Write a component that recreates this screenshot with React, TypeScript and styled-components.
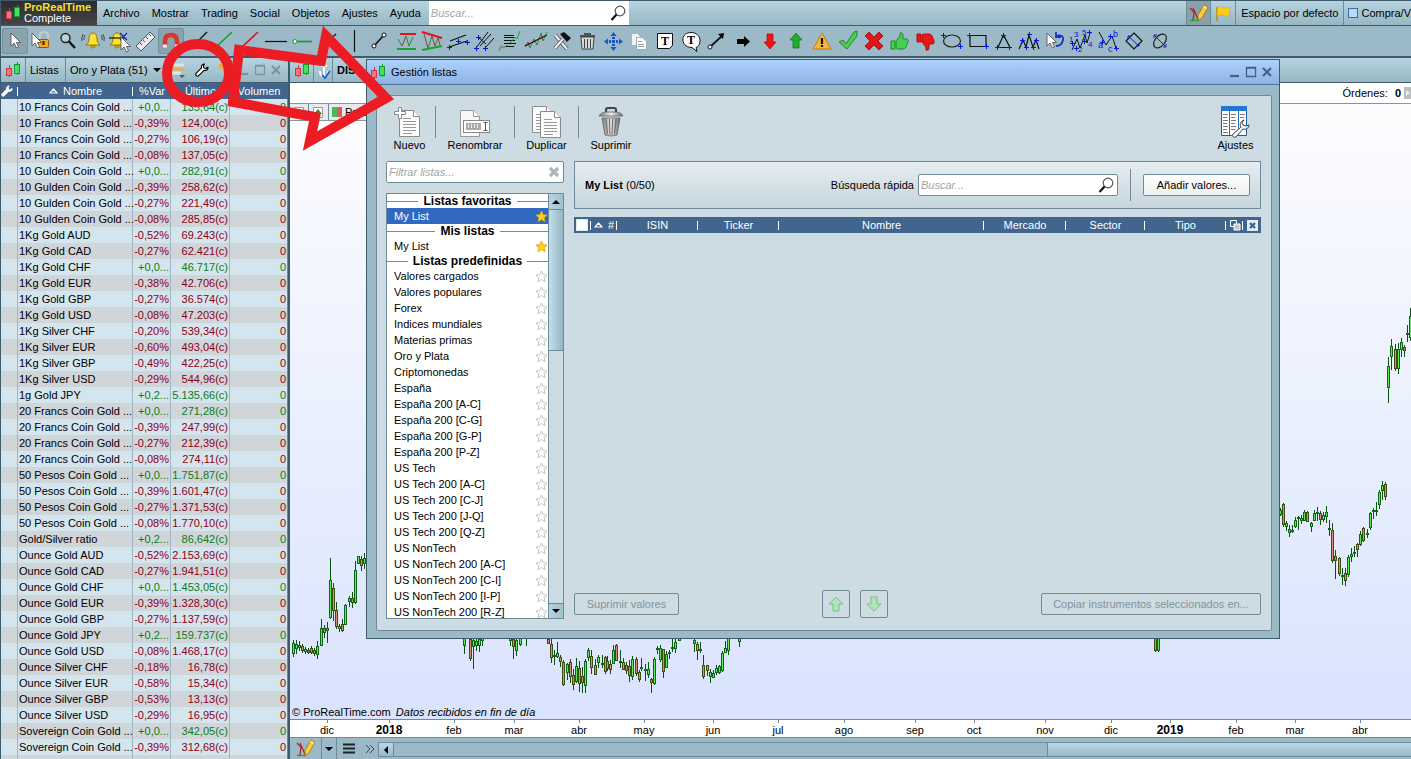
import React from "react";
import styled, { createGlobalStyle, css } from "styled-components";

const GlobalStyle = createGlobalStyle`
  * { box-sizing: border-box; }
  body { margin: 0; font-family: "Liberation Sans", Arial, sans-serif; font-size: 11px; line-height: 14px; color: #000; }
  button, input { font: inherit; color: inherit; margin: 0; }
  button { background: none; border: 0; padding: 0; }
  svg { display: block; flex: none; }
`;

const frame = "#3f5a6b";
const edge = "#6f8b9a";
const steel = "#9bb9c6";
const navy = "#41658c";
const barGradient = "linear-gradient(#b5d4df, #98b7c4)";

/* ---------- shell ---------- */

const Shell = styled.div`
  position: relative;
  display: flex;
  flex-direction: column;
  height: 100vh;
  overflow: hidden;
  background: ${steel};
  border-left: 1px solid ${frame};
  white-space: nowrap;
`;

const MenuBar = styled.nav`
  display: flex;
  flex: none;
  height: 26px;
  border-top: 1px solid ${frame};
  border-bottom: 1px solid ${frame};
  background: ${barGradient};
`;

const Brand = styled.div`
  display: flex;
  align-items: center;
  gap: 2px;
  width: 96px;
  padding-left: 4px;
  background: linear-gradient(#2c2c2e, #454548);
  color: #fff;
`;

const BrandText = styled.div`
  line-height: 11px;
  strong {
    display: block;
    color: #f5e02c;
  }
`;

const MenuItems = styled.div`
  display: flex;
  align-items: center;
  gap: 12px;
  padding: 0 8px 0 6px;
`;

const SearchBox = styled.label<{ $width: number; $framed?: boolean }>`
  display: flex;
  align-items: center;
  width: ${(p) => p.$width}px;
  height: ${(p) => (p.$framed ? "22px" : "auto")};
  padding: 0 3px 0 2px;
  background: #fff;
  ${(p) => p.$framed && css`border: 1px solid ${edge}; border-radius: 2px;`}
  input {
    flex: 1;
    min-width: 0;
    border: 0;
    padding: 0;
    outline: 0;
    background: none;
    font-style: italic;
  }
  input::placeholder { color: #a3a3a3; opacity: 1; }
`;

const Spacer = styled.div`
  flex: 1;
`;

const Workspace = styled.div`
  display: flex;
  align-items: stretch;
`;

const WorkspaceButton = styled.button<{ $on?: boolean }>`
  display: flex;
  align-items: center;
  justify-content: center;
  width: 25px;
  border-right: 1px solid ${edge};
  ${(p) => p.$on && css`background: #8ba0a9; border-left: 1px solid ${edge};`}
`;

const WorkspaceName = styled.button`
  padding: 0 5px;
  border-right: 1px solid ${edge};
`;

const TradeToggle = styled.label`
  display: flex;
  align-items: center;
  gap: 3px;
  padding-left: 4px;
  input {
    appearance: none;
    flex: none;
    width: 10px;
    height: 10px;
    border: 1px solid #3c6ea5;
    background: #b9dafc;
  }
`;

const ToolStrip = styled.div`
  display: flex;
  flex: none;
  align-items: center;
  height: 32px;
  padding-left: 1px;
  border-bottom: 2px solid ${frame};
`;

const Tool = styled.button<{ $on?: boolean }>`
  flex: none;
  width: 26px;
  height: 26px;
  border: 1px solid transparent;
  border-radius: 2px;
  svg { margin: -1px; }
  ${(p) => p.$on && css`background: #8ba3ae; border-color: #7690a0;`}
`;

const Main = styled.main`
  display: flex;
  flex: 1;
  min-height: 0;
`;

/* ---------- quote list ---------- */

const ListPanel = styled.section`
  flex: none;
  width: 289px;
  overflow: hidden;
  border-right: 2px solid ${frame};
  background: #d5e5ed;
`;

const PanelHeader = styled.header`
  display: flex;
  flex: none;
  align-items: stretch;
  height: 25px;
  background: ${barGradient};
  border-bottom: 1px solid ${frame};
`;

const HeaderCell = styled.div<{ $width?: number; $plain?: boolean; $bold?: boolean }>`
  display: flex;
  align-items: center;
  gap: 5px;
  width: ${(p) => (p.$width ? `${p.$width}px` : "auto")};
  padding: 0 4px;
  font-weight: ${(p) => (p.$bold ? 700 : 400)};
  border-right: ${(p) => (p.$plain ? "0" : `1px solid ${edge}`)};
`;

const HeaderTools = styled.div`
  display: flex;
  align-items: center;
  gap: 9px;
  padding: 0 5px;
`;

const WindowButtons = styled.div`
  display: flex;
  align-items: center;
  gap: 4px;
  margin-left: auto;
  padding-right: 6px;
`;

const QuoteTable = styled.table`
  width: 287px;
  table-layout: fixed;
  border-collapse: separate;
  border-spacing: 0;
  th {
    height: 16px;
    padding: 0;
    color: #fff;
    font-weight: 400;
    background: ${navy} linear-gradient(#fff, #fff) no-repeat right center / 1px 9px;
  }
  th:nth-child(3), th:nth-child(4), th:nth-child(5) { background-image: none; }
  th > span { display: flex; align-items: center; justify-content: center; gap: 5px; }
  td {
    height: 16px;
    padding: 0 1px 0 0;
    text-align: right;
    line-height: 16px;
    border-right: 1px solid #9fb6c4;
  }
  td:nth-child(2) { text-align: left; color: #000; padding: 0 0 0 1px; }
  td:nth-child(5) { border-right-color: ${edge}; }
`;

const QuoteRow = styled.tr<{ $up: boolean }>`
  color: ${(p) => (p.$up ? "#0c7c1c" : "#8c0018")};
  background: #d5e5ed;
  &:nth-child(even) { background: #d0d5d9; }
`;

/* ---------- chart ---------- */

const ChartPanel = styled.section`
  display: flex;
  flex: 1;
  flex-direction: column;
  min-width: 0;
`;

const OrdersBar = styled.div`
  display: flex;
  flex: none;
  align-items: center;
  justify-content: flex-end;
  gap: 3px;
  height: 21px;
  background: #fff;
  border-bottom: 1px solid #8a949b;
  b { margin-left: 4px; }
`;

const PlotArea = styled.div`
  display: flex;
  flex: 1;
  flex-direction: column;
  min-height: 0;
  background: linear-gradient(#fdfdfe, #eef3fe 40%, #d9e3fd);
  > svg { flex: 1; min-height: 0; }
`;

const IndicatorTabs = styled.div`
  display: flex;
  height: 17px;
  width: 120px;
  border-bottom: 1px solid #8a949b;
  background: #e6ebee;
  > div { padding: 0 3px; gap: 3px; }
`;

const Credits = styled.div`
  padding-left: 2px;
  em { margin-left: 2px; }
`;

const AxisBar = styled.div`
  height: 19px;
  background: #fff;
  border-top: 1px solid ${edge};
  border-bottom: 1px solid ${edge};
`;

const ChartFooter = styled.footer`
  display: flex;
  align-items: stretch;
  height: 21px;
`;

const FooterButton = styled.button<{ $width: number; $line?: boolean }>`
  display: flex;
  align-items: center;
  justify-content: center;
  width: ${(p) => p.$width}px;
  border-right: ${(p) => (p.$line ? `1px solid ${edge}` : "0")};
`;

const HScroll = styled.div`
  display: flex;
  flex: 1;
  margin: 4px 0 2px;
  border: 1px solid ${edge};
  border-right: 0;
`;

const HScrollThumb = styled.div`
  width: 364px;
  margin-left: auto;
  border-left: 1px solid ${edge};
  background: linear-gradient(#b9d9e4, #98b9c6);
`;

/* ---------- dialog ---------- */

const Dialog = styled.section`
  position: absolute;
  left: 365px;
  right: 131px;
  top: 59px;
  bottom: 120px;
  display: flex;
  flex-direction: column;
  border: 1px solid ${frame};
  background: ${steel};
`;

const TitleBar = styled.header`
  display: flex;
  flex: none;
  align-items: center;
  gap: 4px;
  height: 25px;
  padding-left: 3px;
  background: linear-gradient(#abd1fc, #8fb3e3);
  border-bottom: 1px solid #4d7398;
`;

const DialogBody = styled.div`
  display: flex;
  flex: 1;
  flex-direction: column;
  min-height: 0;
  margin: 10px 7px 7px 9px;
  padding: 10px 10px 11px 9px;
  border: 1px solid ${edge};
  border-radius: 2px;
  background: #cddbe2;
`;

const DialogTools = styled.div`
  display: flex;
  flex: none;
  height: 55px;
`;

const DialogTool = styled.button<{ $width: number }>`
  display: flex;
  flex-direction: column;
  align-items: center;
  width: ${(p) => p.$width}px;
  height: 46px;
  svg { height: 32px; }
`;

const Divider = styled.div`
  flex: none;
  width: 1px;
  height: 32px;
  margin: 0 2px;
  background: ${edge};
`;

const Columns = styled.div`
  display: grid;
  grid-template-columns: 178px 1fr;
  gap: 10px;
  flex: 1;
  min-height: 0;
`;

const Column = styled.div`
  display: flex;
  flex-direction: column;
  min-height: 0;
  min-width: 0;
`;

const ListBox = styled.div`
  display: flex;
  flex: 1;
  min-height: 0;
  margin-top: 10px;
  border: 1px solid ${edge};
  background: #fff;
`;

const ListItems = styled.ul`
  flex: 1;
  margin: 0;
  padding: 0;
  list-style: none;
  overflow: hidden;
`;

const GroupTitle = styled.li`
  display: flex;
  align-items: center;
  gap: 5px;
  height: 14px;
  font-size: 12px;
  font-weight: 700;
  &::before, &::after { content: ""; flex: 1; height: 1px; background: ${edge}; }
`;

const ListItem = styled.li<{ $selected?: boolean }>`
  display: flex;
  align-items: center;
  justify-content: space-between;
  height: 16px;
  padding: 0 0 0 7px;
  ${(p) => p.$selected && css`background: #3068c2; color: #fff;`}
`;

const VScroll = styled.div`
  display: flex;
  flex-direction: column;
  width: 15px;
  border-left: 1px solid ${edge};
  background: #cddbe2;
`;

const ScrollArrow = styled.button`
  display: flex;
  flex: none;
  align-items: center;
  justify-content: center;
  height: 15px;
  background: linear-gradient(90deg, #b8d5df, #9fc0cc);
  &:last-child { border-top: 1px solid ${edge}; }
`;

const HArrow = styled.button`
  display: flex;
  flex: none;
  align-items: center;
  justify-content: center;
  width: 15px;
  border-right: 1px solid ${edge};
  background: linear-gradient(#b9d9e4, #98b9c6);
`;

const VScrollThumb = styled.div`
  height: 142px;
  border-top: 1px solid ${edge};
  border-bottom: 1px solid ${edge};
  background: linear-gradient(90deg, #c4dfe8, #93b6c4);
`;

const ListHeader = styled.div`
  display: flex;
  flex: none;
  align-items: center;
  gap: 10px;
  height: 48px;
  padding: 0 10px;
  border: 1px solid ${edge};
  background: linear-gradient(#e6edf1, #c5d5dd);
`;

const QuickSearch = styled.div`
  display: flex;
  align-items: center;
  gap: 4px;
  margin-left: auto;
`;

const PushButton = styled.button<{ $width: number; $height?: number }>`
  display: flex;
  align-items: center;
  justify-content: center;
  width: ${(p) => p.$width}px;
  height: ${(p) => p.$height ?? 22}px;
  border: 1px solid ${edge};
  border-radius: 2px;
  background: linear-gradient(#fff, #eceff1);
  &:disabled { background: none; color: #84949d; }
`;

const ValuesTable = styled.table`
  width: 100%;
  flex: none;
  margin-top: 8px;
  table-layout: fixed;
  border-collapse: collapse;
  th {
    height: 16px;
    padding: 0;
    color: #fff;
    font-weight: 400;
    background: ${navy} linear-gradient(#fff, #fff) no-repeat right center / 1px 9px;
  }
  th:last-child { background-image: none; }
  th > span { display: flex; align-items: center; justify-content: center; gap: 5px; }
  input {
    appearance: none;
    display: block;
    width: 12px;
    height: 12px;
    margin-left: 2px;
    background: #fff;
    border: 1px solid #dfe8f0;
  }
`;

const DialogActions = styled.div`
  display: flex;
  align-items: center;
  margin-top: auto;
  height: 30px;
`;

const MoveButtons = styled.div`
  display: flex;
  gap: 10px;
  margin: 0 auto 0 143px;
`;

const Annotation = styled.svg`
  position: absolute;
  left: -1px;
  top: 0;
  pointer-events: none;
`;

/* ---------- small drawings ---------- */

const CandleLogo = () => (
  <svg width="17" height="18" viewBox="0 0 17 18" shapeRendering="crispEdges">
    <path d="M4.500 4v12" stroke="#d8343c" />
    <rect x="1.500" y="7.500" width="5" height="7" fill="#f0777b" stroke="#d8343c" />
    <path d="M12.500 1v13" stroke="#149a2e" />
    <rect x="9.500" y="3.500" width="5" height="9" fill="#43e05c" stroke="#149a2e" />
  </svg>
);

const Magnifier = () => (
  <svg width="16" height="16" viewBox="0 0 16 16">
    <circle cx="10" cy="6" r="4.800" fill="#fff" stroke="#555" strokeWidth="1.200" />
    <path d="M6.500 9.500 1.500 15" stroke="#111" strokeWidth="2.200" />
  </svg>
);

const Wrench = ({ size = 14, fill = "#fff", stroke = "#000" }: { size?: number; fill?: string; stroke?: string }) => (
  <svg width={size} height={size} viewBox="0 0 14 14">
    <path d="M9.500 1C7.500 1 6 2.800 6.500 4.900L1.300 10.200a1.600 1.600 0 0 0 2.400 2.400L9 7.400C11.200 8 13.300 6.300 13 4L11 5.500 8.800 5 8.500 2.800z" fill={fill} stroke={stroke} strokeWidth="1.100" strokeLinejoin="round" />
  </svg>
);

const Caret = ({ dir = "down" }: { dir?: "up" | "down" | "left" }) => {
  const d = { up: "M0 6h8L4 2z", down: "M0 2h8L4 6z", left: "M6 0v8L2 4z" }[dir];
  return (
    <svg width="8" height="8" viewBox="0 0 8 8">
      <path d={d} fill="#000" />
    </svg>
  );
};

const SortMark = () => (
  <svg width="9" height="6" viewBox="0 0 9 6">
    <path d="M1 5h7L4.500 1z" fill="none" stroke="#fff" strokeWidth="1.200" />
  </svg>
);

const WindowIcons = ({ color }: { color: string }) => (
  <WindowButtons>
    {["M1 10h9", "M1.500 1.500h9v9h-9zM1 2h10", "M2 2l8 8M10 2l-8 8"].map((d, i) => (
      <button key={d} aria-label={["Minimizar", "Maximizar", "Cerrar"][i]}>
        <svg width="12" height="12" viewBox="0 0 12 12">
          <path d={d} fill="none" stroke={color} strokeWidth={i === 1 ? 1.300 : 2.200} />
        </svg>
      </button>
    ))}
  </WindowButtons>
);

const Star = ({ on }: { on?: boolean }) => (
  <svg width="13" height="13" viewBox="0 0 13 13">
    <path d="M6.500 1 8.100 4.700 12 5.100 9.100 7.700 10 11.700 6.500 9.600 3 11.700 3.900 7.700 1 5.100 4.900 4.700z" fill={on ? "#ffd21f" : "#fff"} stroke={on ? "#e2a600" : "#bcbcbc"} strokeWidth="0.900" />
  </svg>
);

const Page = ({ x, y }: { x: number; y: number }) => (
  <g transform={`translate(${x} ${y})`}>
    <path d="M.5.5h14l6 6v20H.5z" fill="#fbfbfb" stroke="#8b8b8b" />
    <path d="M14.500.5v6h6" fill="#fff" stroke="#8b8b8b" />
    <path d="M4 8.500h8M4 11.500h13M4 14.500h13M4 17.500h13M4 20.500h13M4 23.500h9" stroke="#9a9a9a" />
  </g>
);

const NewIcon = () => (
  <svg width="32" height="32" viewBox="0 0 32 32">
    <Page x={5} y={4} />
    <path d="M4.500 1.500h3v4h4v3h-4v4h-3v-4h-4v-3h4z" fill="#fff" stroke="#888" />
  </svg>
);

const RenameIcon = () => (
  <svg width="32" height="32" viewBox="0 0 32 32">
    <path d="M1.500 4.500h13l6 6v20h-19z" fill="#f7f7f7" stroke="#999" />
    <path d="M14.500 4.500v6h6" fill="#fff" stroke="#999" />
    <rect x="4.500" y="14.500" width="26" height="12" fill="#fff" stroke="#888" />
    <rect x="7" y="17" width="15" height="7" fill="#aaa" />
    <path d="M9.500 18v4M12.500 18v4M15.500 18v4M18.500 18v4" stroke="#eee" />
    <path d="M24.500 16.500h4M24.500 24.500h4M26.500 16.500v8" stroke="#555" />
  </svg>
);

const DuplicateIcon = () => (
  <svg width="32" height="32" viewBox="0 0 32 32">
    <Page x={1} y={0} />
    <Page x={9} y={5} />
  </svg>
);

const BinIcon = () => (
  <svg width="26" height="32" viewBox="0 0 26 32">
    <defs>
      <linearGradient id="bin">
        <stop offset="0" stopColor="#777" />
        <stop offset=".5" stopColor="#eee" />
        <stop offset="1" stopColor="#666" />
      </linearGradient>
    </defs>
    <path d="M8 7V4q0-2 2-2h6q2 0 2 2v3" fill="none" stroke="#444" strokeWidth="2.200" />
    <path d="M1 10q1-3 6-4h12q5 1 6 4z" fill="url(#bin)" stroke="#666" strokeWidth=".8" />
    <path d="M4 12h18l-3 17q-6 2-12 0z" fill="url(#bin)" stroke="#666" strokeWidth=".8" />
    <path d="M8 13l1.500 15M11.500 13l.5 16M14.500 13l-.5 16M18 13l-1.500 15" stroke="#666" />
  </svg>
);

const SettingsIcon = () => (
  <svg width="31" height="32" viewBox="0 0 31 32">
    <path d="M1.500.5h25v29h-25z" fill="#fff" stroke="#1c5fa8" />
    <path d="M1 0h26v5H1z" fill="#2277cf" />
    <path d="M9.500 1v28M18.500 1v28" stroke="#2a6fb8" />
    <path d="M3 8.500h5M3 11.500h4M3 14.500h5M3 17.500h4M3 20.500h5M3 23.500h4M3 26.500h5M11 8.500h5M11 11.500h4M11 14.500h5M11 17.500h4M11 20.500h5M11 23.500h4M20 8.500h5M20 11.500h4" stroke="#777" />
    <path d="M24 14c-3 1-5 4-3 7l-8 7c-2 2 1 4 3 3l7-8c3 1 6-1 6-4l-3 1-3-1-1-2z" fill="#eef2f4" stroke="#444" />
  </svg>
);

const SketchIcon = () => (
  <svg width="20" height="19" viewBox="0 0 20 19">
    <path d="M1 16.500h9" stroke="#1ea83a" strokeWidth="1.400" />
    <path d="M1 4l4 4-1 8M4 4l5 11 3-9" fill="none" stroke="#b01e2b" strokeWidth="1.200" />
    <path d="M9 11 15 1l4 2-6 11-4 2z" fill="#f6cf3a" stroke="#9a7a20" strokeWidth=".8" />
    <path d="M14 2.500l4 2" stroke="#fff3c0" />
  </svg>
);

const FlagIcon = () => (
  <svg width="16" height="17" viewBox="0 0 16 17">
    <path d="M2 2v14" stroke="#b98d10" strokeWidth="1.500" />
    <path d="M2.500 2.500c4-2 7 2 12 0v8c-5 2-8-2-12 0z" fill="#ffcb1c" stroke="#e0a800" strokeWidth=".6" />
  </svg>
);

const MoveArrow = ({ down }: { down?: boolean }) => (
  <svg width="16" height="16" viewBox="0 0 16 16">
    <path d={down ? "M8 15 15 8h-4V1H5v7H1z" : "M8 1 1 8h4v7h6V8h4z"} fill="#b0e3b8" stroke="#7cbf8b" />
  </svg>
);

/* ---------- drawing-tool icons, 26 x 26 ---------- */

const Plus = ({ at }: { at: [number, number][] }) => (
  <path shapeRendering="crispEdges" d={at.map(([x, y]) => `M${x - 2} ${y + 0.5}h5M${x + 0.5} ${y - 2}v5`).join("")} stroke="#0a14d8" fill="none" />
);
const Ink = ({ d, c = "#111", w = 1.200 }: { d: string; c?: string; w?: number }) => (
  <path d={d} fill="none" stroke={c} strokeWidth={w} />
);
const Cursor = ({ x = 9, y = 5 }: { x?: number; y?: number }) => (
  <path transform={`translate(${x} ${y})`} d="M0 0v13l3-3 2.500 5 2-1L5.500 9.500h4z" fill="#fff" stroke="#555" strokeWidth=".9" />
);
const Bell = ({ x }: { x: number }) => (
  <path transform={`translate(${x} 5)`} d="M7 0c-3 0-4 3-4 6s-1 4-3 6h14c-2-2-3-3-3-6s-1-6-4-6zM5 13a2 2 0 0 0 4 0z" fill="#ffe32e" stroke="#8a6d00" strokeWidth=".9" />
);
const Thumb = "M1 10h4v8H1zM6 10l4-5V2q3-1 3 3v3h4q2 1 1 3l-2 5q-1 2-3 2H8l-2-1z";

const tools: [string, React.ReactNode][] = [
  ["Cursor", <Cursor />],
  ["Bloquear", <><path d="M12 12V8q0-4 4-4t4 4v4" fill="none" stroke="#c9c9c9" strokeWidth="2.200" /><rect x="9.500" y="11.500" width="11" height="8" rx="1" fill="#f5a81c" stroke="#8a5b0a" /><path d="M15.500 13v4" stroke="#222" strokeWidth="2" /><Cursor x={4} y={5} /></>],
  ["Zoom", <><circle cx="11.500" cy="10" r="4.500" fill="#bcd0d9" stroke="#222" strokeWidth="1.400" /><Ink d="M15 13.500 21 20" w={2.400} /></>],
  ["Alerta", <><Bell x={6} /><Ink d="M5 7q-2 3-1 5M21 7q2 3 1 5M3 6q-2 4-1 7M23 6q2 4 1 7" c="#444" w={1} /></>],
  ["Borrar alerta", <><Bell x={4} /><Ink d="M3 10h16" /><Ink d="M14 5l7 7M21 5l-7 7" c="#1420d8" /><Cursor x={15} y={9} /></>],
  ["Regla", <path d="M4 18 18 4l5 5L9 23zM8 15l2 2M11 12l2 2M14 9l2 2M17 6l2 2" fill="#e9e9e9" stroke="#555" />],
  ["Imán", <><path d="M7 19v-6q0-6 6-6t6 6v6" fill="none" stroke="#d9362a" strokeWidth="4.400" /><path d="M5 18h4M17 18h4" stroke="#eee" strokeWidth="3" /></>],
  ["Línea", <Ink d="M5 22 23 4" />],
  ["Línea alcista", <Ink d="M5 20 22 4" c="#179a2b" w={1.600} />],
  ["Línea bajista", <Ink d="M5 20 22 4" c="#d4151f" w={1.600} />],
  ["Horizontal", <Ink d="M3 13.500h22" />],
  ["Semirrecta", <><Ink d="M8 13.500h16" c="#1a9a2c" w={1.600} /><circle cx="7" cy="13.500" r="2" fill="#fff" stroke="#1a9a2c" /></>],
  ["Oblicua", <Ink d="M6 20 22 6" />],
  ["Vertical", <Ink d="M14.500 2v22" />],
  ["Segmento", <><Ink d="M8 18 18 7" w={1.600} /><circle cx="8" cy="18" r="2" fill="#fff" stroke="#111" /><circle cx="18" cy="7" r="2" fill="#fff" stroke="#111" /></>],
  ["Canal", <><Ink d="M8 6h16" c="#dd1420" w={2} /><Ink d="M5 21h19" c="#16a52c" w={2} /><Ink d="M6 11l4 7" c="#2a8a36" w={1} /><Ink d="M10 18l4-10" c="#a33" w={1} /><Ink d="M14 8l3 10 4-9" c="#2a8a36" w={1} /></>],
  ["Triángulo", <><Ink d="M4 4l20 6" c="#dd1420" w={2} /><Ink d="M4 22l20-4" c="#16a52c" w={2} /><Ink d="M6 6l4 14M14 8l3 10M20 10l2 7" c="#a33" w={1} /><Ink d="M10 20l4-12M17 18l3-8" c="#2a8a36" w={1} /></>],
  ["Paralelas", <><Ink d="M6 13 22 7M5 19l18-6" /><Plus at={[[5, 19], [14, 13], [23, 14]]} /></>],
  ["Horquilla", <><Ink d="M6 20 18 4M10 18 21 6M15 20l9-10M8 9l8 7" w={1} /><Plus at={[[8, 9], [6, 20], [15, 20]]} /></>],
  ["Regresión", <><Ink d="M8 7.500h10M8 9.500h12M8 12.500h11M8 15.500h12M10 18.500h8" /><Ink d="M14 15l5-6 2 2 3-8" c="#18a52c" w={1} /><Ink d="M3 23l2-5 3 2 3-3" c="#9c5c26" w={1} /></>],
  ["Tendencia", <><Ink d="M3 19l3-5 2 6M12 11l3 6M19 5l2 8" c="#a33" w={1} /><Ink d="M8 20l4-9M15 17l4-12M21 13l4-9" c="#2a9a36" w={1} /><Ink d="M3 18 25 7" /></>],
  ["Ajustes", <><Ink d="M7 7l12 14" c="#555" w={3.600} /><Ink d="M7 7l12 14" c="#f4f4f4" w={2} /><Ink d="M7 20 15 11" c="#555" w={3.600} /><Ink d="M7 20 15 11" c="#f4f4f4" w={2} /><path d="M12 6l4-2 7 6-4 4z" fill="#111" /></>],
  ["Papelera", <><path d="M7 9h13l-1 12H8z" fill="#d8d8d8" stroke="#444" /><path d="M6 8h15M10 6h7" stroke="#333" strokeWidth="1.600" /><path d="M10.500 11v9M13.500 11v9M16.500 11v9" stroke="#444" /></>],
  ["Mover", <path d="M13.500 4l3 4h-6zM13.500 23l3-4h-6zM4 13.500l4-3v6zM23 13.500l-4-3v6zM12 9h3v2h-3zM12 16h3v2h-3zM9 12h2v3H9zM16 12h2v3h-2zM12 12h3v3h-3z" fill="#1c56c0" />],
  ["Copiar", <><path d="M5.500 5.500h6l3 3v9h-9z" fill="#f2f2f2" stroke="#a9b4ba" /><path d="M10.500 9.500h6l4 4v8h-10z" fill="#fff" stroke="#a0a9ae" /><Ink d="M12 13.500h4M12 16.500h6M12 18.500h6" c="#8f9aa0" w={1} /></>],
  ["Texto", <><path d="M5.500 5.500h15v12l-3 3h-12z" fill="#fff" stroke="#111" /><text x="13" y="17" fontFamily="Liberation Serif, serif" fontWeight="700" fontSize="12" textAnchor="middle">T</text></>],
  ["Comentario", <><path d="M13 4.500c11 0 11 13 5 15l1 4-5-4c-12 0-12-15-1-15z" fill="#fff" stroke="#111" /><text x="13" y="16" fontFamily="Liberation Serif, serif" fontWeight="700" fontSize="12" textAnchor="middle">T</text></>],
  ["Flecha", <><Ink d="M7 18 18 8" w={1.800} /><path d="M20 5l-1 6-5-5z" /><circle cx="6" cy="19" r="2" fill="#fff" stroke="#111" /></>],
  ["Flecha derecha", <path d="M7 11h7V8l6 5.500L14 19v-3H7z" />],
  ["Flecha abajo", <path d="M11 6h6v8h3l-6 7-6-7h3z" fill="#f01414" stroke="#9c0a0a" strokeWidth=".7" />],
  ["Flecha arriba", <path d="M11 20h6v-8h3l-6-7-6 7h3z" fill="#1fae2c" stroke="#0c6c16" strokeWidth=".7" />],
  ["Aviso", <><path d="M14 5l9 16H5z" fill="#f8b43a" stroke="#c17d0c" strokeLinejoin="round" /><Ink d="M14 10v6M14 17v2" w={2.200} /></>],
  ["Correcto", <path d="M5 14l4-2 3 4 8-12 3-1v5L13 21z" fill="#46cf50" stroke="#17751e" strokeWidth=".8" />],
  ["Incorrecto", <path d="M5 8l4-4 5 5 5-5 4 4-5 5 5 5-4 4-5-5-5 5-4-4 5-5z" fill="#e3131a" stroke="#8f0a0e" strokeWidth=".8" />],
  ["Me gusta", <path transform="translate(4 3)" d={Thumb} fill="#46cf52" stroke="#1d8428" strokeWidth=".9" />],
  ["No me gusta", <path transform="translate(4 24) scale(1 -1)" d={Thumb} fill="#f01414" stroke="#9c0a0a" strokeWidth=".9" />],
  ["Elipse", <><ellipse cx="14" cy="13" rx="8.500" ry="6" fill="none" stroke="#222" strokeWidth="1.200" /><Plus at={[[5, 7], [22, 18]]} /></>],
  ["Rectángulo", <><Ink d="M6 7.500h16v11H6z" /><Plus at={[[5, 7], [22, 18]]} /></>],
  ["Forma triangular", <><Ink d="M13.500 7 8 19.500h12z" /><Plus at={[[13, 7], [7, 19], [19, 19]]} /></>],
  ["Ondas", <><Ink d="M3 21l4-9 3 7 3-12 4 12 3-7 3 9" /><Plus at={[[6, 12], [10, 19], [13, 6], [17, 19], [20, 12]]} /></>],
  ["Rotar", <><Cursor x={5} y={5} /><Ink d="M14 8q8-2 7 4t-7 6M14 4v5h5" c="#1b33c8" w={1.800} /></>],
  ["Elliott", <><Ink d="M4 22l5-11 3 9 5-13 2 8 3-10" w={1} /><g fill="#0a14d8" fontSize="8"><text x="1" y="14">1</text><text x="10" y="24">2</text><text x="6" y="9">3</text><text x="20" y="19">4</text><text x="14" y="7">5</text></g><Plus at={[[4, 15], [8, 20], [16, 13], [21, 4]]} /></>],
  ["ABC", <><Ink d="M5 4l7 13 6-9 4 12" w={1} /><g fill="#0a14d8" fontSize="9"><text x="4" y="20">a</text><text x="19" y="9">b</text><text x="14" y="24">c</text></g><Plus at={[[8, 14], [16, 8], [22, 20]]} /></>],
  ["Rombo", <><Ink d="M14 5l8 8-8 8-8-8z" /><Ink d="M8 8l11 10M8 8v3M8 8h3M19 18v-3M19 18h-3" c="#1420c8" w={1} /></>],
  ["Elipse rotada", <><ellipse cx="14" cy="13" rx="8" ry="5" transform="rotate(-50 14 13)" fill="none" stroke="#222" strokeWidth="1.200" /><Ink d="M8 7l12 12M8 7v3M8 7h3M20 19v-3M20 19h-3" c="#1420c8" w={1} /></>],
];

/* ---------- data ---------- */

const quotes: [string, string, string][] = [
  ["10 Francs Coin Gold ...", "+0,0...", "135,64"],
  ["10 Francs Coin Gold ...", "-0,39%", "124,00"],
  ["10 Francs Coin Gold ...", "-0,27%", "106,19"],
  ["10 Francs Coin Gold ...", "-0,08%", "137,05"],
  ["10 Gulden Coin Gold ...", "+0,0...", "282,91"],
  ["10 Gulden Coin Gold ...", "-0,39%", "258,62"],
  ["10 Gulden Coin Gold ...", "-0,27%", "221,49"],
  ["10 Gulden Coin Gold ...", "-0,08%", "285,85"],
  ["1Kg Gold AUD", "-0,52%", "69.243"],
  ["1Kg Gold CAD", "-0,27%", "62.421"],
  ["1Kg Gold CHF", "+0,0...", "46.717"],
  ["1Kg Gold EUR", "-0,38%", "42.706"],
  ["1Kg Gold GBP", "-0,27%", "36.574"],
  ["1Kg Gold USD", "-0,08%", "47.203"],
  ["1Kg Silver CHF", "-0,20%", "539,34"],
  ["1Kg Silver EUR", "-0,60%", "493,04"],
  ["1Kg Silver GBP", "-0,49%", "422,25"],
  ["1Kg Silver USD", "-0,29%", "544,96"],
  ["1g Gold JPY", "+0,2...", "5.135,66"],
  ["20 Francs Coin Gold ...", "+0,0...", "271,28"],
  ["20 Francs Coin Gold ...", "-0,39%", "247,99"],
  ["20 Francs Coin Gold ...", "-0,27%", "212,39"],
  ["20 Francs Coin Gold ...", "-0,08%", "274,11"],
  ["50 Pesos Coin Gold ...", "+0,0...", "1.751,87"],
  ["50 Pesos Coin Gold ...", "-0,39%", "1.601,47"],
  ["50 Pesos Coin Gold ...", "-0,27%", "1.371,53"],
  ["50 Pesos Coin Gold ...", "-0,08%", "1.770,10"],
  ["Gold/Silver ratio", "+0,2...", "86,642"],
  ["Ounce Gold AUD", "-0,52%", "2.153,69"],
  ["Ounce Gold CAD", "-0,27%", "1.941,51"],
  ["Ounce Gold CHF", "+0,0...", "1.453,05"],
  ["Ounce Gold EUR", "-0,39%", "1.328,30"],
  ["Ounce Gold GBP", "-0,27%", "1.137,59"],
  ["Ounce Gold JPY", "+0,2...", "159.737"],
  ["Ounce Gold USD", "-0,08%", "1.468,17"],
  ["Ounce Silver CHF", "-0,18%", "16,78"],
  ["Ounce Silver EUR", "-0,58%", "15,34"],
  ["Ounce Silver GBP", "-0,53%", "13,13"],
  ["Ounce Silver USD", "-0,29%", "16,95"],
  ["Sovereign Coin Gold ...", "+0,0...", "342,05"],
  ["Sovereign Coin Gold ...", "-0,39%", "312,68"],
];

const predefined = [
  "Valores cargados", "Valores populares", "Forex", "Indices mundiales", "Materias primas", "Oro y Plata",
  "Criptomonedas", "España", "España 200 [A-C]", "España 200 [C-G]", "España 200 [G-P]", "España 200 [P-Z]",
  "US Tech", "US Tech 200 [A-C]", "US Tech 200 [C-J]", "US Tech 200 [J-Q]", "US Tech 200 [Q-Z]",
  "US NonTech", "US NonTech 200 [A-C]", "US NonTech 200 [C-I]", "US NonTech 200 [I-P]", "US NonTech 200 [R-Z]",
];

const months: [number, string][] = [
  [37, "dic"], [99, "2018"], [164, "feb"], [224, "mar"], [289, "abr"], [354, "may"], [423, "jun"], [488, "jul"],
  [554, "ago"], [625, "sep"], [684, "oct"], [755, "nov"], [821, "dic"], [880, "2019"], [946, "feb"], [1005, "mar"], [1070, "abr"],
];

/* x, high, body top, body bottom, low; a trailing 1 marks a falling bar */
const bars = `293 640 643 653 656;296 640 644 648 653;299 641 645 647 650;302 644 646 650 652 1;305 647 649 651 653;308 648 650 652 653 1;311 646 648 652 653 1;314 648 650 653 655 1;317 641 646 654 658;321 619 628 645 645;324 625 628 632 637 1;327 622 628 630 642;330 558 580 617 618;333 583 588 610 620 1;336 602 610 626 628 1;339 624 626 628 631;342 619 624 630 631 1;345 604 605 624 624;349 596 598 601 606;352 592 598 602 607 1;355 561 570 602 603;358 556 556 563 563;361 556 559 565 570 1;364 553 558 563 568;
464 630 635 645 653;470 630 639 658 660 1;473 630 640 646 668;476 630 641 645 650;479 630 639 645 651;482 630 636 640 645;510 630 636 640 645;513 630 639 646 658 1;516 630 640 650 655;520 630 637 644 645;526 630 635 638 645;548 636 639 643 643 1;551 639 644 657 662 1;554 650 655 656 664;557 642 653 656 657;560 655 657 661 666 1;563 660 662 684 685 1;567 663 664 672 679;570 659 662 676 682 1;573 669 675 684 689 1;576 658 666 681 682;579 661 668 683 691 1;582 667 676 682 692 1;585 659 661 685 692;588 648 650 657 660;591 650 656 667 673 1;595 659 665 674 674 1;598 655 657 662 667;602 655 663 664 667;605 656 657 671 673 1;607 656 661 668 670 1;610 660 664 669 673 1;613 645 650 663 663;616 644 645 660 660 1;620 650 661 662 667;623 658 662 669 669 1;626 662 665 670 673 1;629 660 666 675 681 1;632 656 659 676 679;636 657 659 673 675 1;639 670 672 679 681 1;641 658 667 668 670;645 664 669 670 680;648 662 669 674 677;651 678 679 682 692 1;654 657 659 683 684;657 646 648 649 653;660 645 648 659 661;663 649 649 671 677 1;666 651 654 667 667;669 650 652 653 658;672 638 647 648 651;675 638 642 648 652;679 636 637 640 640;694 638 640 643 651;697 642 644 650 659 1;700 642 649 650 652;703 655 665 676 678 1;707 665 665 670 675 1;710 669 672 676 682;713 670 673 677 677;716 665 668 672 674;719 665 666 672 673;722 651 653 670 671;725 641 648 652 652;728 636 638 650 654;739 636 638 641 646;
1155 630 636 650 651 1;1158 630 636 650 651;
1280 508 510 514 515;1283 503 504 524 526 1;1286 521 523 526 530;1289 525 529 532 536;1292 525 530 531 532;1295 517 520 526 527;1298 516 517 518 529;1301 515 518 520 523;1304 510 512 520 520;1307 511 512 521 521 1;1311 522 523 526 531;1314 510 513 520 520;1317 507 512 513 520;1320 511 513 519 524 1;1323 512 515 519 521;1326 506 512 516 522;1329 520 528 529 535;1332 523 530 560 562 1;1335 550 556 560 578 1;1339 557 558 573 575 1;1342 568 575 576 584;1345 568 573 580 585 1;1348 555 557 574 576;1351 548 554 556 561;1354 546 552 553 556;1357 543 544 549 556 1;1360 531 534 544 545;1363 527 528 540 541 1;1367 529 533 534 537;1370 512 513 527 529;1373 508 510 511 518;1376 502 510 511 515;1379 490 492 504 508;1382 481 485 490 499;1385 482 484 496 499 1;1388 357 366 387 402;1391 339 346 356 369;1395 344 349 368 370 1;1398 343 349 368 373;1401 338 342 349 356;1404 345 347 350 356 1;1407 325 333 334 341;1410 308 316 337 340`
  .split(";")
  .map((row) => row.trim().split(" ").map(Number));

const Candles = () => (
  <svg width="100%" shapeRendering="crispEdges" role="img" aria-label="Gráfico de velas">
    <g transform="translate(-290 -121)">
      {bars.map(([x, high, top, bottom, low, down]) => (
        <g key={x}>
          <rect x={x} y={high} width="1" height={low - high + 1} fill="#0b5212" />
          <rect x={x - 1} y={top} width="3" height={Math.max(1, bottom - top + 1)} fill={down ? "#3f4c12" : "#0c6a16"} />
          {bottom - top > 1 && <rect x={x} y={top + 1} width="1" height={bottom - top - 1} fill={down ? "#d98d70" : "#5fe85c"} />}
        </g>
      ))}
    </g>
  </svg>
);

const TimeAxis = () => (
  <svg width="100%" height="17" aria-label="Eje temporal">
    {months.map(([x, label]) => (
      <g key={x}>
        <rect x={x} y="0" width="1" height="3" fill={edge} />
        <text x={x} y="14" textAnchor="middle" fontSize={label.length > 3 ? 12 : 11} fontWeight={label.length > 3 ? 700 : 400}>{label}</text>
      </g>
    ))}
  </svg>
);

/* ---------- page ---------- */

const QuoteList = () => (
  <ListPanel>
    <PanelHeader>
      <HeaderCell $width={25}><CandleLogo /></HeaderCell>
      <HeaderCell $width={40}>Listas</HeaderCell>
      <HeaderCell $plain>Oro y Plata (51)<Caret /></HeaderCell>
      <HeaderTools>
        <svg width="16" height="16" viewBox="0 0 16 16">
          <path d="M2 3h12M2 11h9" stroke="#dfe6ea" strokeWidth="3" />
          <path d="M2 7h12" stroke="#f4ad4e" strokeWidth="3" />
          <path d="M9 13h6l-3 3z" fill="#555" />
        </svg>
        <Wrench />
        <svg width="14" height="14" viewBox="0 0 14 14">
          <path d="M1 1h7v5H1z" fill="#f4a93e" />
          <path d="M6 8h6v4H6z" fill="#f4c98a" />
        </svg>
      </HeaderTools>
      <WindowIcons color="#7f939e" />
    </PanelHeader>
    <QuoteTable>
      <colgroup>
        <col style={{ width: 17 }} /><col style={{ width: 115 }} /><col style={{ width: 38 }} /><col style={{ width: 59 }} /><col />
      </colgroup>
      <thead>
        <tr>
          <th aria-label="Ajustes"><Wrench size={12} fill="#fff" stroke="#fff" /></th>
          <th><span><SortMark />Nombre</span></th>
          <th>%Var</th>
          <th>Último</th>
          <th>Volumen</th>
        </tr>
      </thead>
      <tbody>
        {quotes.map(([name, change, last], i) => (
          <QuoteRow key={i} $up={change.startsWith("+")}>
            <td />
            <td>{name}</td>
            <td>{change}</td>
            <td>{last}(c)</td>
            <td>0</td>
          </QuoteRow>
        ))}
        <QuoteRow $up><td /><td /><td /><td /><td /></QuoteRow>
      </tbody>
    </QuoteTable>
  </ListPanel>
);

const Chart = () => (
  <ChartPanel>
    <PanelHeader>
      <HeaderCell $width={24}><CandleLogo /></HeaderCell>
      <HeaderCell $width={19}>
        <svg width="13" height="20" viewBox="0 0 13 20">
          <path d="M6 2v14M3 6h6M2 11q0 5 4 6 4-1 4-6" fill="none" stroke="#fff" strokeWidth="2" />
          <path d="M4 15l3 3 5-7" fill="none" stroke="#1d63c8" strokeWidth="2" />
        </svg>
      </HeaderCell>
      <HeaderCell $plain $bold>DIS</HeaderCell>
    </PanelHeader>
    <OrdersBar>
      <span>Órdenes: <b>0</b></span>
      <svg width="7" height="12" viewBox="0 0 7 12">
        <path d="M0 0h7v12H0z" fill="#b9bfc2" />
        <path d="M2 3l4 3-4 3z" fill="#eee" />
      </svg>
    </OrdersBar>
    <PlotArea>
      <IndicatorTabs>
        <HeaderCell $width={19}><svg width="12" height="13"><path d="M1.500 1.500h9v10h-9z" fill="#fff" stroke="#999" /><path d="M3 6h6" stroke="#999" /></svg></HeaderCell>
        <HeaderCell $width={20}><svg width="12" height="13"><path d="M1.500 1.500h9v10h-9z" fill="#fff" stroke="#999" /><path d="M6 3l4 5H8v3H4V8H2z" fill="#1c9a2a" /></svg></HeaderCell>
        <HeaderCell $plain><svg width="10" height="10"><path d="M0 0h5v10H0z" fill="#4bb860" /><path d="M5 0h5v10H5z" fill="#e05a5a" /></svg>Precio</HeaderCell>
      </IndicatorTabs>
      <Candles />
      <Credits>© ProRealTime.com <em>Datos recibidos en fin de día</em></Credits>
    </PlotArea>
    <AxisBar><TimeAxis /></AxisBar>
    <ChartFooter>
      <FooterButton $width={32} $line aria-label="Dibujar"><SketchIcon /></FooterButton>
      <FooterButton $width={15} $line aria-label="Más dibujos"><Caret /></FooterButton>
      <FooterButton $width={24} aria-label="Menú"><svg width="12" height="12"><path d="M0 1.500h12M0 5.500h12M0 9.500h12" stroke="#222" strokeWidth="2" /></svg></FooterButton>
      <FooterButton $width={17} aria-label="Expandir"><svg width="10" height="8"><path d="M1 0l4 4-4 4M5 0l4 4-4 4" fill="none" stroke="#444" /></svg></FooterButton>
      <HScroll>
        <HArrow aria-label="Desplazar a la izquierda"><Caret dir="left" /></HArrow>
        <HScrollThumb />
      </HScroll>
    </ChartFooter>
  </ChartPanel>
);

const ListManager = () => (
  <Dialog role="dialog" aria-label="Gestión listas">
    <TitleBar>
      <CandleLogo />
      Gestión listas
      <WindowIcons color="#3f628c" />
    </TitleBar>
    <DialogBody>
      <DialogTools>
        <DialogTool $width={47}><NewIcon />Nuevo</DialogTool>
        <Divider />
        <DialogTool $width={74}><RenameIcon />Renombrar</DialogTool>
        <Divider />
        <DialogTool $width={59}><DuplicateIcon />Duplicar</DialogTool>
        <Divider />
        <DialogTool $width={60}><BinIcon />Suprimir</DialogTool>
        <Spacer />
        <DialogTool $width={51}><SettingsIcon />Ajustes</DialogTool>
      </DialogTools>
      <Columns>
        <Column>
          <SearchBox $width={178} $framed>
            <input placeholder="Filtrar listas..." aria-label="Filtrar listas" />
            <svg width="12" height="12" viewBox="0 0 12 12"><path d="M2 2l8 8M10 2l-8 8" stroke="#aeb4b7" strokeWidth="3.200" /></svg>
          </SearchBox>
          <ListBox>
            <ListItems>
              <GroupTitle>Listas favoritas</GroupTitle>
              <ListItem $selected>My List<Star on /></ListItem>
              <GroupTitle>Mis listas</GroupTitle>
              <ListItem>My List<Star on /></ListItem>
              <GroupTitle>Listas predefinidas</GroupTitle>
              {predefined.map((name) => (
                <ListItem key={name}>{name}<Star /></ListItem>
              ))}
            </ListItems>
            <VScroll>
              <ScrollArrow aria-label="Subir"><Caret dir="up" /></ScrollArrow>
              <VScrollThumb />
              <Spacer />
              <ScrollArrow aria-label="Bajar"><Caret /></ScrollArrow>
            </VScroll>
          </ListBox>
        </Column>
        <Column>
          <ListHeader>
            <span><b>My List</b> (0/50)</span>
            <QuickSearch>
              <label htmlFor="quick">Búsqueda rápida</label>
              <SearchBox as="div" $width={200} $framed>
                <input id="quick" placeholder="Buscar..." />
                <Magnifier />
              </SearchBox>
            </QuickSearch>
            <Divider />
            <PushButton $width={107}>Añadir valores...</PushButton>
          </ListHeader>
          <ValuesTable>
            <colgroup>
              <col style={{ width: 17 }} /><col style={{ width: 26 }} /><col style={{ width: 81 }} /><col style={{ width: 81 }} /><col />
              <col style={{ width: 82 }} /><col style={{ width: 79 }} /><col style={{ width: 81 }} /><col style={{ width: 17 }} /><col style={{ width: 18 }} />
            </colgroup>
            <thead>
              <tr>
                <th><input type="checkbox" aria-label="Seleccionar todo" /></th>
                <th><span><SortMark />#</span></th>
                <th>ISIN</th>
                <th>Ticker</th>
                <th>Nombre</th>
                <th>Mercado</th>
                <th>Sector</th>
                <th>Tipo</th>
                <th aria-label="Copiar"><span><svg width="12" height="12"><path d="M1.500 1.500h6v6h-6z" fill="none" stroke="#fff" /><path d="M5 5h6v6H5z" fill="#b8c8da" stroke="#fff" /></svg></span></th>
                <th aria-label="Quitar"><span><svg width="11" height="11"><path d="M0 0h11v11H0z" fill="#e4ecf4" /><path d="M3 3l5 5M8 3l-5 5" stroke={navy} strokeWidth="2.400" /></svg></span></th>
              </tr>
            </thead>
          </ValuesTable>
          <DialogActions>
            <PushButton $width={105} disabled>Suprimir valores</PushButton>
            <MoveButtons>
              <PushButton $width={28} $height={28} disabled aria-label="Subir"><MoveArrow /></PushButton>
              <PushButton $width={28} $height={28} disabled aria-label="Bajar"><MoveArrow down /></PushButton>
            </MoveButtons>
            <PushButton $width={220} disabled>Copiar instrumentos seleccionados en...</PushButton>
          </DialogActions>
        </Column>
      </Columns>
    </DialogBody>
  </Dialog>
);

export default function App() {
  return (
    <Shell>
      <GlobalStyle />
      <MenuBar>
        <Brand>
          <CandleLogo />
          <BrandText><strong>ProRealTime</strong>Complete</BrandText>
        </Brand>
        <MenuItems>
          {["Archivo", "Mostrar", "Trading", "Social", "Objetos", "Ajustes", "Ayuda"].map((name) => (
            <button key={name}>{name}</button>
          ))}
        </MenuItems>
        <SearchBox $width={200}>
          <input placeholder="Buscar..." aria-label="Buscar" />
          <Magnifier />
        </SearchBox>
        <Spacer />
        <Workspace>
          <WorkspaceButton $on aria-label="Herramientas de dibujo"><SketchIcon /></WorkspaceButton>
          <WorkspaceButton aria-label="Marcador"><FlagIcon /></WorkspaceButton>
          <WorkspaceName>Espacio por defecto</WorkspaceName>
          <TradeToggle><input type="checkbox" />Compra/V</TradeToggle>
        </Workspace>
      </MenuBar>
      <ToolStrip>
        {tools.map(([name, icon], i) => (
          <Tool key={name} aria-label={name} $on={i === 0 || i === 6}>
            <svg width="26" height="26" viewBox="0 0 26 26">{icon}</svg>
          </Tool>
        ))}
      </ToolStrip>
      <Main>
        <QuoteList />
        <Chart />
      </Main>
      <ListManager />
      <Annotation width="400" height="160" viewBox="0 0 400 160" fill="none" stroke="#ec1c24" strokeWidth="10">
        <ellipse cx="198" cy="73" rx="31" ry="29" />
        <path d="M239 50 321 61 326 36 386 98 310 141 315 117 233 102z" />
      </Annotation>
    </Shell>
  );
}
